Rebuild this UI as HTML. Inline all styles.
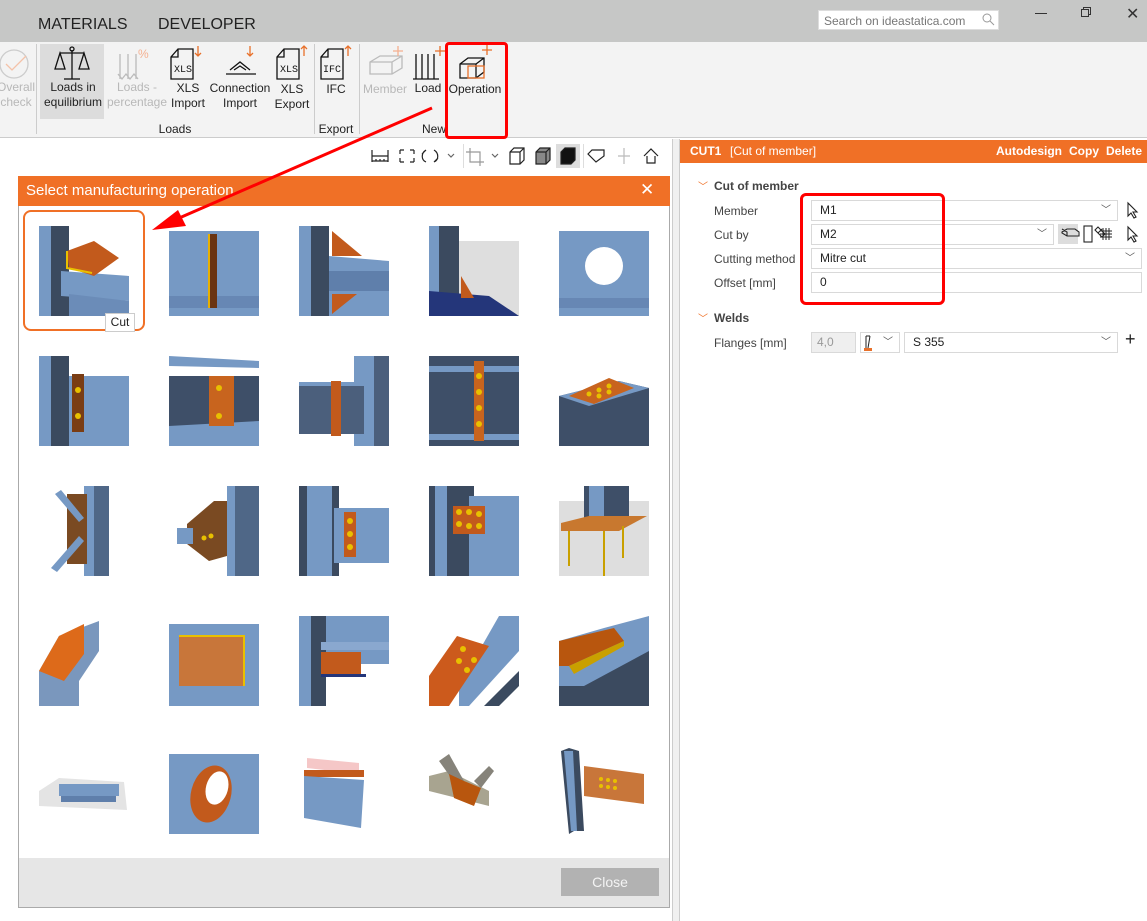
<!DOCTYPE html>
<html><head><meta charset="utf-8">
<style>
*{margin:0;padding:0;box-sizing:border-box}
body{width:1147px;height:921px;overflow:hidden;background:#fff;font-family:"Liberation Sans",sans-serif;position:relative;color:#222}
.a{position:absolute}
.t{font-size:12px;text-align:center;line-height:15px;color:#222}
.g{color:#b8b8b8}
.lbl{font-size:12px;color:#444}
.box{position:absolute;border:1px solid #d9d9d9;background:#fff;font-size:12px;padding-left:8px;line-height:19px;height:21px}
.chev{position:absolute;right:6px;top:0;font-size:10px;color:#555}
</style></head><body>
<!-- title bar -->
<div class="a" style="left:0;top:0;width:1147px;height:42px;background:#c6c7c6"></div>
<div class="a" style="left:38px;top:16px;font-size:16px;color:#222">MATERIALS</div>
<div class="a" style="left:158px;top:16px;font-size:16px;color:#222">DEVELOPER</div>
<div class="a" style="left:818px;top:10px;width:181px;height:20px;background:#fff;border:1px solid #ddd;font-size:12px;color:#777;padding:3px 0 0 5px">Search on ideastatica.com</div>
<svg class="a" style="left:982px;top:13px" width="13" height="13"><circle cx="5" cy="5" r="4" fill="none" stroke="#999"/><line x1="8" y1="8" x2="12" y2="12" stroke="#999"/></svg>
<div class="a" style="left:1035px;top:13px;width:12px;height:1px;background:#333"></div>
<svg class="a" style="left:1081px;top:7px" width="10" height="10"><rect x="0.5" y="2.5" width="7" height="7" fill="none" stroke="#333"/><path d="M2.5 2.5V0.5H9.5V7.5H7.5" fill="none" stroke="#333"/></svg>
<div class="a" style="left:1126px;top:4px;font-size:16px;color:#333">✕</div>
<!-- ribbon -->
<div class="a" style="left:0;top:42px;width:1147px;height:96px;background:#f3f3f3;border-bottom:1px solid #ccc"></div>
<div class="a" style="left:40px;top:44px;width:64px;height:75px;background:#dcdcdc"></div>
<div class="a" style="left:36px;top:44px;width:1px;height:90px;background:#ccc"></div>
<div class="a" style="left:314px;top:44px;width:1px;height:90px;background:#ccc"></div>
<div class="a" style="left:359px;top:44px;width:1px;height:90px;background:#ccc"></div>
<svg class="a" style="left:0;top:44px" width="680" height="40" fill="none" stroke-width="1.3">
<circle cx="14" cy="20" r="14" stroke="#ccc"/><path d="M6 20l6 6 14-14" stroke="#f4c2a8"/>
<g stroke="#111"><line x1="72" y1="6" x2="72" y2="35"/><line x1="64" y1="35" x2="80" y2="35"/><line x1="60" y1="9" x2="84" y2="9"/><path d="M60 9l-5 16h10z M84 9l-5 16h10z"/><circle cx="72" cy="5" r="2"/></g>
<g stroke="#bbb"><path d="M120 10v25M128 10v25M136 10v25M118 30l4 5 4-5 4 5 4-5 4 5"/></g><text x="138" y="14" fill="#f4b090" font-size="12" stroke="none">%</text>
<g stroke="#111"><path d="M178 5h15v30h-22v-22z M171 13h7v-8"/></g><text x="174" y="28" font-size="10" fill="#111" stroke="none" font-family="Liberation Mono">XLS</text><path d="M198 2v10M195 9l3 3 3-3" stroke="#e8702a"/>
<g stroke="#111"><path d="M226 30h30M230 26l10-8 10 8M234 26l6-4 6 4"/></g><path d="M250 2v10M247 9l3 3 3-3" stroke="#e8702a"/>
<g stroke="#111"><path d="M284 5h15v30h-22v-22z M277 13h7v-8"/></g><text x="280" y="28" font-size="10" fill="#111" stroke="none" font-family="Liberation Mono">XLS</text><path d="M304 12v-10M301 5l3-3 3 3" stroke="#e8702a"/>
<g stroke="#111"><path d="M328 5h15v30h-22v-22z M321 13h7v-8"/></g><text x="323" y="28" font-size="10" fill="#111" stroke="none" font-family="Liberation Mono">IFC</text><path d="M348 12v-10M345 5l3-3 3 3" stroke="#e8702a"/>
<path d="M370 18l10-6h22v12l-10 6h-22z M370 18h22l10-6 M392 18v12" stroke="#bbb"/><path d="M398 2v10M393 7h10" stroke="#f4b090"/>
<path d="M416 10v25M422 10v25M428 10v25M434 10v25M413 35h26" stroke="#111"/><path d="M440 2v10M435 7h10" stroke="#e8702a"/>
<path d="M460 20l8-6h16v14l-8 6h-16z M460 20h16l8-6 M476 20v14" stroke="#111"/><rect x="468" y="22" width="16" height="12" stroke="#e8702a"/><path d="M487 1v10M482 6h10" stroke="#e8702a"/>
</svg>
<div class="a t g" style="left:-4px;top:80px;width:40px">Overall<br>check</div>
<div class="a t" style="left:40px;top:80px;width:66px">Loads in<br>equilibrium</div>
<div class="a t g" style="left:104px;top:80px;width:66px">Loads -<br>percentage</div>
<div class="a t" style="left:164px;top:81px;width:48px">XLS<br>Import</div>
<div class="a t" style="left:206px;top:81px;width:68px">Connection<br>Import</div>
<div class="a t" style="left:270px;top:82px;width:44px">XLS<br>Export</div>
<div class="a t" style="left:316px;top:82px;width:40px">IFC</div>
<div class="a t g" style="left:360px;top:82px;width:50px">Member</div>
<div class="a t" style="left:410px;top:81px;width:36px">Load</div>
<div class="a t" style="left:444px;top:82px;width:62px">Operation</div>
<div class="a t" style="left:150px;top:122px;width:50px">Loads</div>
<div class="a t" style="left:316px;top:122px;width:40px">Export</div>
<div class="a t" style="left:414px;top:122px;width:40px">New</div>
<!-- viewport toolbar -->
<svg class="a" style="left:368px;top:144px" width="300" height="24" fill="none" stroke="#222" stroke-width="1.2">
<path d="M4 6v12M20 6v12M4 12h16M4 17h16M8 15v2M12 15v2M16 15v2"/>
<path d="M32 6h4M32 6v4M46 6h-4M46 6v4M32 18h4M32 18v-4M46 18h-4M46 18v-4"/>
<path d="M58 6c-5 3-5 10 0 12M66 6c5 3 5 10 0 12M54 10l4-4M70 14l-4 4"/><path d="M80 10l3 3 3-3" stroke="#666"/>
<g stroke="#999"><path d="M102 4v14h14M98 8h14v14"/></g><path d="M124 10l3 3 3-3" stroke="#666"/>
<path d="M142 8l4-4h10v12l-4 4h-10z M142 8h10l4-4M152 8v12"/>
<path d="M168 8l4-4h10v12l-4 4h-10z" fill="#888"/><path d="M168 8h10l4-4M178 8v12"/>
<rect x="188" y="0" width="24" height="24" fill="#ddd" stroke="none"/><path d="M193 8l4-4h10v12l-4 4h-10z" fill="#111"/>
<path d="M220 10l4-4h12v6l-8 6z"/><path d="M256 4v16M250 12h12" stroke="#bbb"/><path d="M276 12l7-7 7 7M279 12v7h8v-7"/>
</svg>
<div class="a" style="left:463px;top:144px;width:1px;height:24px;background:#ddd"></div>
<div class="a" style="left:583px;top:144px;width:1px;height:24px;background:#ddd"></div>
<!-- divider -->
<div class="a" style="left:672px;top:139px;width:8px;height:782px;background:#f0f0f0;border-left:1px solid #ccc;border-right:1px solid #ccc"></div>
<!-- dialog -->
<div class="a" style="left:18px;top:176px;width:652px;height:732px;border:1px solid #aaa;background:#fff"></div>
<div class="a" style="left:18px;top:176px;width:652px;height:30px;background:#f07026;color:#fff;font-size:15px;padding:6px 0 0 8px">Select manufacturing operation</div>
<div class="a" style="left:640px;top:180px;color:#fff;font-size:17px">✕</div>
<div class="a" style="left:19px;top:858px;width:650px;height:49px;background:#e6e6e6"></div>
<div class="a" style="left:561px;top:868px;width:98px;height:28px;background:#b2b2b2;color:#f4f4f4;font-size:14px;text-align:center;line-height:28px">Close</div>
<div class="a" style="left:23px;top:210px;width:122px;height:121px;border:2px solid #f07026;border-radius:8px"></div>
<svg class="a" style="left:0;top:0" width="680" height="921">
<defs>
<g id="col"><rect x="0" y="0" width="30" height="90" fill="#3b4a5f"/><rect x="0" y="0" width="12" height="90" fill="#7699c4"/></g>
</defs>
<!-- row1 -->
<g transform="translate(39,226)"><use href="#col"/><polygon points="22,45 90,50 90,75 22,70" fill="#7699c4"/><polygon points="30,68 90,75 90,90 30,90" fill="#6b8cb8"/><polygon points="28,25 55,15 80,32 55,50 30,42" fill="#c25a1c"/><path d="M28 25v17l25 5" stroke="#e8c000" fill="none" stroke-width="2"/></g>
<g transform="translate(169,226)"><rect x="0" y="5" width="90" height="85" fill="#7699c4"/><rect x="0" y="70" width="90" height="12" fill="#6787b4"/><rect x="40" y="8" width="8" height="74" fill="#6a3412"/><rect x="39" y="8" width="2" height="74" fill="#e8b000"/></g>
<g transform="translate(299,226)"><use href="#col"/><polygon points="30,30 90,35 90,90 30,90" fill="#7699c4"/><rect x="30" y="45" width="60" height="20" fill="#5f7fab"/><polygon points="33,5 63,30 33,30" fill="#c25a1c"/><polygon points="33,68 58,68 33,88" fill="#c25a1c"/></g>
<g transform="translate(429,226)"><rect x="0" y="15" width="90" height="75" fill="#dedede"/><rect x="0" y="0" width="30" height="70" fill="#3b4a5f"/><rect x="0" y="0" width="10" height="70" fill="#7699c4"/><polygon points="0,65 60,70 90,90 0,90" fill="#24367a"/><polygon points="32,50 45,72 32,72" fill="#c25a1c"/></g>
<g transform="translate(559,226)"><rect x="0" y="5" width="90" height="85" fill="#7699c4"/><rect x="0" y="72" width="90" height="10" fill="#6787b4"/><circle cx="45" cy="40" r="19" fill="#fff"/></g>
<!-- row2 -->
<g transform="translate(39,356)"><use href="#col"/><rect x="30" y="20" width="60" height="70" fill="#7699c4"/><rect x="33" y="18" width="12" height="58" fill="#7a3d14"/><circle cx="39" cy="34" r="3" fill="#e8c000"/><circle cx="39" cy="60" r="3" fill="#e8c000"/></g>
<g transform="translate(169,356)"><polygon points="0,0 90,5 90,12 0,10" fill="#7699c4"/><rect x="0" y="20" width="90" height="70" fill="#3e4f68"/><polygon points="0,70 90,65 90,90 0,90" fill="#7699c4"/><rect x="40" y="20" width="25" height="50" fill="#c8641e"/><circle cx="50" cy="32" r="3" fill="#e8c000"/><circle cx="50" cy="60" r="3" fill="#e8c000"/></g>
<g transform="translate(299,356)"><rect x="55" y="0" width="35" height="90" fill="#7699c4"/><rect x="75" y="0" width="15" height="90" fill="#4b5f7c"/><rect x="0" y="28" width="65" height="50" fill="#4b5f7c"/><rect x="0" y="26" width="65" height="4" fill="#7699c4"/><rect x="32" y="25" width="10" height="55" fill="#c25a1c"/></g>
<g transform="translate(429,356)"><rect x="0" y="0" width="90" height="90" fill="#3e4f68"/><rect x="0" y="10" width="90" height="6" fill="#7699c4"/><rect x="0" y="78" width="90" height="6" fill="#7699c4"/><rect x="45" y="5" width="10" height="80" fill="#c8641e"/><g fill="#e8c000"><circle cx="50" cy="20" r="3"/><circle cx="50" cy="36" r="3"/><circle cx="50" cy="52" r="3"/><circle cx="50" cy="68" r="3"/></g></g>
<g transform="translate(559,356)"><polygon points="0,40 60,25 90,32 90,90 0,90" fill="#3e4f68"/><polygon points="0,40 60,25 90,32 30,50" fill="#7699c4"/><polygon points="10,40 50,22 75,32 35,48" fill="#c8641e"/><g fill="#e8c000"><circle cx="30" cy="38" r="2.5"/><circle cx="40" cy="34" r="2.5"/><circle cx="50" cy="30" r="2.5"/><circle cx="40" cy="40" r="2.5"/><circle cx="50" cy="36" r="2.5"/></g></g>
<!-- row3 -->
<g transform="translate(39,486)"><rect x="45" y="0" width="25" height="90" fill="#4f6787"/><rect x="45" y="0" width="10" height="90" fill="#7699c4"/><rect x="28" y="8" width="20" height="70" fill="#7a4a22"/><polygon points="16,8 22,4 45,32 40,36" fill="#7699c4"/><polygon points="12,82 40,50 45,55 18,86" fill="#7699c4"/></g>
<g transform="translate(169,486)"><rect x="58" y="0" width="32" height="90" fill="#4f6787"/><rect x="58" y="0" width="8" height="90" fill="#7699c4"/><polygon points="18,38 45,15 58,15 58,70 40,75 18,58" fill="#7a4a22"/><rect x="8" y="42" width="16" height="16" fill="#7699c4"/><circle cx="35" cy="52" r="2.5" fill="#e8c000"/><circle cx="42" cy="50" r="2.5" fill="#e8c000"/></g>
<g transform="translate(299,486)"><rect x="0" y="0" width="40" height="90" fill="#3b4a5f"/><rect x="8" y="0" width="25" height="90" fill="#7699c4"/><rect x="35" y="22" width="55" height="55" fill="#7699c4"/><rect x="45" y="26" width="12" height="45" fill="#c25a1c"/><g fill="#e8c000"><circle cx="51" cy="35" r="3"/><circle cx="51" cy="48" r="3"/><circle cx="51" cy="61" r="3"/></g></g>
<g transform="translate(429,486)"><rect x="0" y="0" width="45" height="90" fill="#3b4a5f"/><rect x="6" y="0" width="12" height="90" fill="#7699c4"/><rect x="40" y="10" width="50" height="80" fill="#7699c4"/><rect x="24" y="20" width="32" height="28" fill="#c25a1c"/><g fill="#e8c000"><circle cx="30" cy="26" r="3"/><circle cx="40" cy="26" r="3"/><circle cx="50" cy="28" r="3"/><circle cx="30" cy="38" r="3"/><circle cx="40" cy="40" r="3"/><circle cx="50" cy="40" r="3"/></g></g>
<g transform="translate(559,486)"><rect x="0" y="15" width="90" height="75" fill="#dedede"/><rect x="25" y="0" width="45" height="35" fill="#3e4f68"/><rect x="30" y="0" width="15" height="35" fill="#7699c4"/><polygon points="2,37 30,30 88,30 60,45 2,45" fill="#c8782f"/><g stroke="#c9a000" stroke-width="2"><line x1="10" y1="45" x2="10" y2="80"/><line x1="45" y1="45" x2="45" y2="90"/><line x1="64" y1="40" x2="64" y2="72"/></g></g>
<!-- row4 -->
<g transform="translate(39,616)"><polygon points="0,55 20,20 60,5 60,35 40,65 40,90 0,90" fill="#7a97bd"/><polygon points="0,55 20,20 45,8 45,38 25,65" fill="#dd6a1a"/></g>
<g transform="translate(169,616)"><rect x="0" y="8" width="90" height="82" fill="#7699c4"/><rect x="10" y="20" width="65" height="50" fill="#c8763a"/><path d="M10 20h65v50" stroke="#e8c000" fill="none" stroke-width="2"/></g>
<g transform="translate(299,616)"><rect x="0" y="0" width="90" height="90" fill="#7699c4"/><rect x="12" y="0" width="15" height="90" fill="#3b4a5f"/><rect x="27" y="48" width="63" height="42" fill="#fff"/><rect x="22" y="26" width="68" height="8" fill="#8aa8cf"/><rect x="22" y="36" width="40" height="22" fill="#c25a1c"/><rect x="22" y="58" width="45" height="3" fill="#24367a"/></g>
<g transform="translate(429,616)"><polygon points="40,90 90,35 90,0 70,0 30,70 30,90" fill="#7699c4"/><polygon points="55,90 90,55 90,70 70,90" fill="#3b4a5f"/><polygon points="0,60 28,20 60,30 20,90 0,90" fill="#cc5a1c"/><g fill="#e8c000"><circle cx="34" cy="33" r="3"/><circle cx="30" cy="45" r="3"/><circle cx="45" cy="44" r="3"/><circle cx="38" cy="54" r="3"/></g></g>
<g transform="translate(559,616)"><rect x="0" y="25" width="90" height="65" fill="#3b4a5f"/><polygon points="0,25 45,12 90,0 90,35 25,70 0,70" fill="#7699c4"/><polygon points="0,25 55,12 65,25 10,50 0,50" fill="#b8560e"/><polygon points="10,50 65,25 65,30 15,58" fill="#c9a000"/></g>
<!-- row5 -->
<g transform="translate(39,746)"><polygon points="0,45 20,32 85,36 88,64 0,60" fill="#e4e4e4"/><rect x="20" y="38" width="60" height="12" fill="#7699c4"/><rect x="22" y="50" width="55" height="6" fill="#5f7fab"/></g>
<g transform="translate(169,746)"><rect x="0" y="8" width="90" height="80" fill="#7699c4"/><ellipse cx="42" cy="48" rx="20" ry="29" fill="#c25a1c" transform="rotate(15 42 48)"/><ellipse cx="48" cy="42" rx="11" ry="17" fill="#fff" transform="rotate(15 48 42)"/></g>
<g transform="translate(299,746)"><polygon points="8,12 60,17 60,28 8,22" fill="#f5c7c7"/><rect x="5" y="24" width="60" height="7" fill="#c25a1c"/><polygon points="5,30 65,34 62,82 5,72" fill="#7699c4"/></g>
<g transform="translate(429,746)"><polygon points="0,30 20,25 60,45 60,60 0,45" fill="#a8a490"/><polygon points="10,15 20,8 35,35 28,40" fill="#86837a"/><polygon points="45,35 60,20 65,25 52,42" fill="#86837a"/><polygon points="20,28 35,35 52,42 45,60 25,52" fill="#b8560e"/></g>
<g transform="translate(559,746)"><polygon points="2,5 10,2 20,5 25,85 15,85 10,88" fill="#3b4a5f"/><polygon points="5,5 14,5 18,85 12,85" fill="#7699c4"/><polygon points="25,20 85,28 85,58 25,50" fill="#c8763a"/><g fill="#e8c000"><circle cx="42" cy="33" r="2"/><circle cx="49" cy="34" r="2"/><circle cx="56" cy="35" r="2"/><circle cx="42" cy="40" r="2"/><circle cx="49" cy="41" r="2"/><circle cx="56" cy="42" r="2"/></g></g>
</svg>
<div class="a" style="left:105px;top:313px;width:30px;height:19px;background:#fff;border:1px solid #ccc;font-size:12px;text-align:center;line-height:17px">Cut</div>
<!-- right panel -->
<div class="a" style="left:680px;top:140px;width:467px;height:23px;background:#f07026;color:#fff;font-size:12px;line-height:23px">
<span style="position:absolute;left:10px;font-weight:bold">CUT1</span><span style="position:absolute;left:50px">[Cut of member]</span>
<span style="position:absolute;left:316px;font-weight:bold">Autodesign</span><span style="position:absolute;left:389px;font-weight:bold">Copy</span><span style="position:absolute;left:426px;font-weight:bold">Delete</span></div>
<div class="a" style="left:698px;top:178px;color:#f07026;font-size:10px">﹀</div>
<div class="a" style="left:714px;top:179px;font-size:12px;font-weight:bold;color:#444">Cut of member</div>
<div class="a lbl" style="left:714px;top:204px">Member</div>
<div class="a lbl" style="left:714px;top:228px">Cut by</div>
<div class="a lbl" style="left:714px;top:252px">Cutting method</div>
<div class="a lbl" style="left:714px;top:276px">Offset [mm]</div>
<div class="box" style="left:811px;top:200px;width:307px">M1<span class="chev">﹀</span></div>
<div class="box" style="left:811px;top:224px;width:243px">M2<span class="chev">﹀</span></div>
<div class="box" style="left:811px;top:248px;width:331px">Mitre cut<span class="chev">﹀</span></div>
<div class="box" style="left:811px;top:272px;width:331px">0</div>
<div class="a" style="left:1058px;top:224px;width:20px;height:20px;background:#ddd"></div>
<svg class="a" style="left:1058px;top:200px" width="89" height="50" fill="none" stroke="#222" stroke-width="1.1">
<path d="M70 3v13l3-3 3 5 2-1-3-5h4z"/>
<path d="M4 32l5-3h8l4 3v4h-12l-5-3z M9 36v-4l-5-3"/>
<rect x="26" y="26" width="8" height="16"/><path d="M37 30l3-3 7 7-3 3zM40 33l4-4M43 36l-3-3"/>
<path d="M70 27v13l3-3 3 5 2-1-3-5h4z"/>
</svg>
<svg class="a" style="left:1098px;top:226px" width="16" height="16" fill="none" stroke="#222"><path d="M2 5h12M2 8h12M2 11h12M5 2v12M8 2v12M11 2v12"/></svg>
<div class="a" style="left:698px;top:310px;color:#f07026;font-size:10px">﹀</div>
<div class="a" style="left:714px;top:311px;font-size:12px;font-weight:bold;color:#444">Welds</div>
<div class="a lbl" style="left:714px;top:336px">Flanges [mm]</div>
<div class="box" style="left:811px;top:332px;width:45px;background:#efefef;color:#999;padding-left:5px">4,0</div>
<div class="box" style="left:860px;top:332px;width:40px"><span class="chev">﹀</span></div>
<svg class="a" style="left:862px;top:334px" width="16" height="18"><path d="M4 2v12M4 2h4M8 2l-2 12" stroke="#222" fill="none"/><rect x="2" y="14" width="8" height="3" fill="#e8702a"/></svg>
<div class="box" style="left:904px;top:332px;width:214px">S 355<span class="chev">﹀</span></div>
<div class="a" style="left:1125px;top:329px;font-size:18px;color:#222">+</div>
<!-- red annotations -->
<div class="a" style="left:445px;top:42px;width:63px;height:97px;border:3px solid #f00;border-radius:4px"></div>
<div class="a" style="left:800px;top:193px;width:145px;height:112px;border:3px solid #f00;border-radius:6px"></div>
<svg class="a" style="left:0;top:0" width="680" height="300"><line x1="432" y1="108" x2="170" y2="222" stroke="#f00" stroke-width="3"/><polygon points="152,230 178,210 186,226" fill="#f00"/></svg>
</body></html>
